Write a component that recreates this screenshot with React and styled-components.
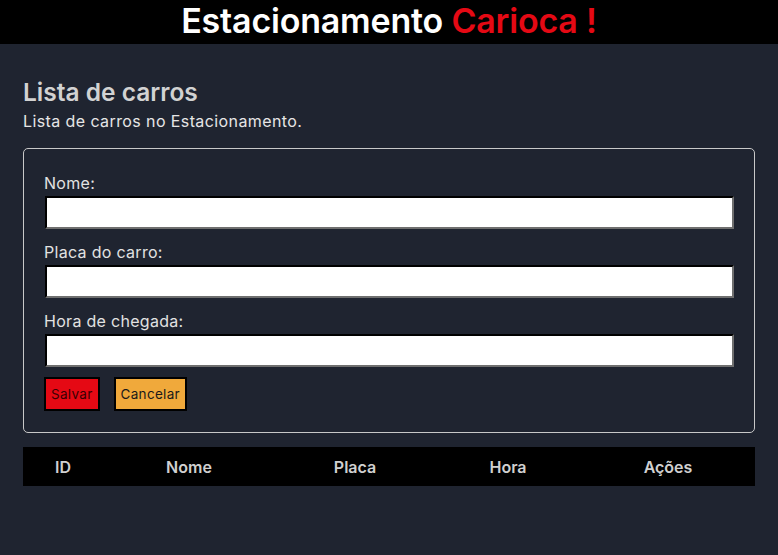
import React from "react";
import styled, { createGlobalStyle } from "styled-components";

const Global = createGlobalStyle`
  html, body { margin: 0; padding: 0; background: #1f2430; }
  body { font-family: Inter, "Open Sans", sans-serif; min-height: 555px; }
  * { box-sizing: border-box; }
`;

const Header = styled.header`
  background: #000;
  height: 44px;
  display: flex;
  align-items: center;
  justify-content: center;
`;

const Title = styled.h1`
  margin: 0 0 2px;
  font-size: 34px;
  font-weight: 600;
  color: #fff;
  line-height: 40px;
  letter-spacing: -0.2px;
`;

const Red = styled.span`
  color: #e50914;
`;

const Main = styled.main`
  padding: 33px 23px 0 23px;
`;

const Heading = styled.h2`
  margin: 0;
  font-size: 24.5px;
  font-weight: 600;
  color: #d2d2d2;
  line-height: 30px;
`;

const Sub = styled.p`
  margin: 4px 0 0;
  font-size: 16px;
  letter-spacing: 0.4px;
  color: #e6e6e6;
  line-height: 20px;
`;

const FormBox = styled.form`
  margin-top: 17px;
  border: 1px solid #c8c8c8;
  border-radius: 5px;
  padding: 22px 20px 21px 20px;
  display: flex;
  flex-direction: column;
`;

const Field = styled.div`
  display: flex;
  flex-direction: column;
  margin-bottom: 11px;
`;

const Label = styled.label`
  font-size: 16px;
  letter-spacing: 0.3px;
  color: #e2e2e2;
  line-height: 24px;
  margin-bottom: 1px;
`;

const Input = styled.input`
  height: 33px;
  margin-left: 1px;
  width: 689px;
  background: #fff;
  border: 2px inset #767676;
  border-top-color: #1a1a1a;
  border-left-color: #1a1a1a;
  border-bottom-color: #6f6f6f;
  border-right-color: #6f6f6f;
  outline: none;
`;

const Buttons = styled.div`
  display: flex;
  gap: 14px;
  margin-top: -1px;
`;

const Button = styled.button`
  height: 34px;
  padding: 0 5px;
  border: 2px solid #000;
  background: ${(p) => (p.$variant === "save" ? "#e50914" : "#f0a93b")};
  color: ${(p) => (p.$variant === "save" ? "#3a0002" : "#1a1a1a")};
  font-family: inherit;
  font-size: 13.5px;
  letter-spacing: 0.3px;
  cursor: pointer;
`;

const Table = styled.table`
  margin-top: 14px;
  width: 732px;
  border-collapse: collapse;
  background: #000;
`;

const Th = styled.th`
  height: 39px;
  padding: 0;
  color: #d0d0d0;
  font-size: 16px;
  font-weight: 600;
  text-align: center;
`;

const cols = [
  ["ID", 80],
  ["Nome", 172],
  ["Placa", 160],
  ["Hora", 146],
  ["Ações", 174],
];

export default function App() {
  return (
    <>
      <Global />
      <Header>
        <Title>
          Estacionamento <Red>Carioca !</Red>
        </Title>
      </Header>
      <Main>
        <Heading>Lista de carros</Heading>
        <Sub>Lista de carros no Estacionamento.</Sub>
        <FormBox onSubmit={(e) => e.preventDefault()}>
          <Field>
            <Label>Nome:</Label>
            <Input type="text" />
          </Field>
          <Field>
            <Label>Placa do carro:</Label>
            <Input type="text" />
          </Field>
          <Field>
            <Label>Hora de chegada:</Label>
            <Input type="text" />
          </Field>
          <Buttons>
            <Button $variant="save">Salvar</Button>
            <Button type="button" $variant="cancel">Cancelar</Button>
          </Buttons>
        </FormBox>
        <Table>
          <thead>
            <tr>
              {cols.map(([c, w]) => (
                <Th key={c} style={{ width: w }}>{c}</Th>
              ))}
            </tr>
          </thead>
        </Table>
      </Main>
    </>
  );
}
